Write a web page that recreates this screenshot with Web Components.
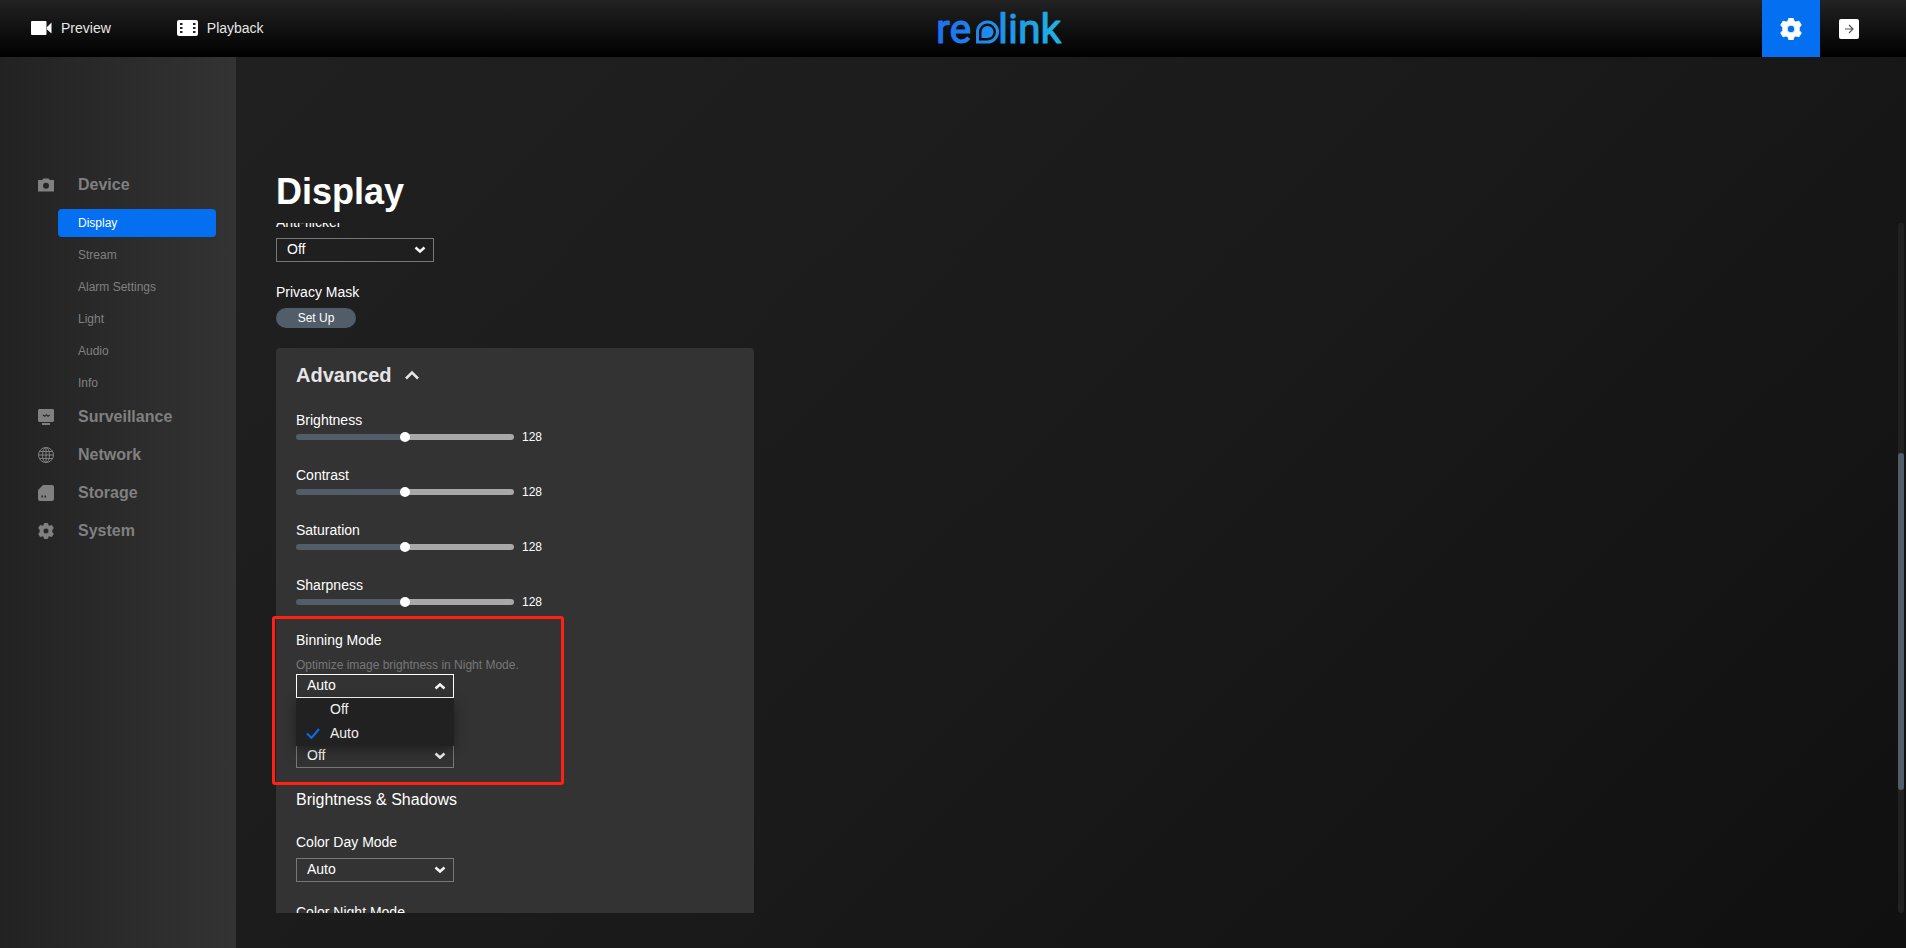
<!DOCTYPE html>
<html lang="en">

<head>
    <meta charset="UTF-8">
    <meta name="viewport" content="width=device-width, initial-scale=1.0">
    <title>Reolink</title>
    <style>
        body {
            margin: 0;
            height: 100vh;
            display: flex;
            flex-direction: column;
            overflow: hidden;
            background: #111;
            color: #fff;
            font: 14px/20px "Liberation Sans", Arial, sans-serif;
        }

        .page {
            flex: 1;
            min-height: 0;
            display: flex;
        }
    </style>
</head>

<body>
    <app-header></app-header>
    <div class="page">
        <side-nav>
            <nav-group name="Device" icon="camera">
                <nav-item active>Display</nav-item>
                <nav-item>Stream</nav-item>
                <nav-item>Alarm Settings</nav-item>
                <nav-item>Light</nav-item>
                <nav-item>Audio</nav-item>
                <nav-item>Info</nav-item>
            </nav-group>
            <nav-group name="Surveillance" icon="monitor"></nav-group>
            <nav-group name="Network" icon="globe"></nav-group>
            <nav-group name="Storage" icon="card"></nav-group>
            <nav-group name="System" icon="gear"></nav-group>
        </side-nav>
        <settings-page heading="Display">
            <select-field label="Anti-flicker" value="Off"></select-field>
            <button-field label="Privacy Mask">Set Up</button-field>
            <fold-panel heading="Advanced">
                <range-field label="Brightness" value="128"></range-field>
                <range-field label="Contrast" value="128"></range-field>
                <range-field label="Saturation" value="128"></range-field>
                <range-field label="Sharpness" value="128"></range-field>
                <marked-area>
                    <select-field label="Binning Mode" hint="Optimize image brightness in Night Mode." options="Off,Auto" value="Auto" open></select-field>
                    <select-field value="Off"></select-field>
                </marked-area>
                <sub-heading>Brightness &amp; Shadows</sub-heading>
                <select-field label="Color Day Mode" value="Auto"></select-field>
                <select-field label="Color Night Mode" value="Auto"></select-field>
            </fold-panel>
        </settings-page>
    </div>

    <template id="app-header">
        <style>
            :host {
                display: grid;
                grid-template-columns: 236px 1fr auto;
                height: 57px;
                background: linear-gradient(#222, #000);
            }

            nav {
                display: flex;
                align-items: center;
                gap: 66px;
                padding: 0 0 2px 31px;
                white-space: nowrap;
            }

            a {
                display: flex;
                align-items: center;
                gap: 8px;
                color: #e6e6e6;
                text-decoration: none;
            }

            svg {
                display: block;
            }

            .logo {
                display: flex;
                align-items: center;
                justify-content: center;
            }

            .tools {
                display: flex;
                padding-right: 28px;
            }

            button {
                width: 58px;
                padding: 0;
                border: 0;
                background: none;
                display: flex;
                align-items: center;
                justify-content: center;
            }

            .on {
                background: #046ff0;
            }
        </style>
        <nav>
            <a href="#preview">
                <svg width="22" height="16" viewBox="0 0 22 16">
                    <path fill="#fff" d="M1 1h13.500a1 1 0 0 1 1 1v12a1 1 0 0 1-1 1H1a1 1 0 0 1-1-1V2a1 1 0 0 1 1-1zM16 7l4.500-4.500v11L16 9.500z" />
                </svg>
                Preview
            </a>
            <a href="#playback">
                <svg width="22" height="16" viewBox="0 0 22 16">
                    <rect width="21" height="16" rx="2" fill="#fff" />
                    <path fill="#222" d="M3 3h2.500v2H3zM3 7h2.500v2H3zM3 11h2.500v2H3zM16 3h2.500v2H16zM16 7h2.500v2H16zM16 11h2.500v2H16z" />
                </svg>
                Playback
            </a>
        </nav>
        <div class="logo">
            <svg width="132" height="57" viewBox="0 0 132 57" role="img" aria-label="reolink">
                <defs>
                    <linearGradient id="ink" gradientUnits="userSpaceOnUse" x1="4" y1="0" x2="128" y2="0">
                        <stop offset="0" stop-color="#1f6ff2" />
                        <stop offset="1" stop-color="#1fb4e4" />
                    </linearGradient>
                </defs>
                <g fill="url(#ink)" stroke="url(#ink)" stroke-linejoin="round" font-family="Roboto, sans-serif" font-size="41">
                    <text x="3" y="43">re</text>
                    <text x="65" y="43">link</text>
                </g>
                <path fill="none" stroke="url(#ink)" stroke-width="3" d="M44.500 42V32a10 10 0 1 1 10 10z" />
                <path fill="url(#ink)" d="M48.500 38v-6a6 6 0 1 1 6 6z" />
            </svg>
        </div>
        <div class="tools">
            <button class="on" aria-label="Settings"><rl-icon name="gear" size="22" style="color: #fff"></rl-icon></button>
            <button aria-label="Log out">
                <svg width="20" height="20" viewBox="0 0 20 20">
                    <rect width="20" height="20" rx="2" fill="#fff" />
                    <path d="M6 10h7.500M10 6l4 4-4 4" fill="none" stroke="#555" stroke-width="1.200" />
                </svg>
            </button>
        </div>
    </template>

    <template id="side-nav">
        <style>
            :host {
                flex: none;
                box-sizing: border-box;
                width: 236px;
                padding: 109px 20px 0 38px;
                background: linear-gradient(90deg, #222, #333);
            }
        </style>
        <slot></slot>
    </template>

    <template id="nav-group">
        <style>
            :host {
                display: block;
            }

            button {
                display: flex;
                align-items: center;
                gap: 24px;
                width: 100%;
                height: 38px;
                padding: 0;
                border: 0;
                background: none;
                color: #808080;
                font: bold 16px/20px "Liberation Sans", Arial, sans-serif;
            }

            .items {
                display: flex;
                flex-direction: column;
                gap: 4px;
                padding: 5px 0 1px 20px;
            }

            :host(:empty) .items {
                display: none;
            }
        </style>
        <button><rl-icon size="16"></rl-icon><span></span></button>
        <div class="items">
            <slot></slot>
        </div>
    </template>

    <template id="nav-item">
        <style>
            :host {
                display: block;
            }

            a {
                display: block;
                padding: 0 20px;
                border-radius: 4px;
                color: #808080;
                font-size: 12px;
                line-height: 28px;
                text-decoration: none;
            }

            :host([active]) a {
                background: #046ff0;
                color: #fff;
            }
        </style>
        <a href="#"><slot></slot></a>
    </template>

    <template id="settings-page">
        <style>
            :host {
                flex: 1;
                min-width: 0;
                display: flex;
                flex-direction: column;
                padding: 113px 2px 35px 0;
                background: linear-gradient(135deg, #202020, #1a1a1a 50%, #101010);
            }

            h1 {
                margin: 0 0 9px 40px;
                font-size: 36px;
                line-height: 44px;
            }

            .body {
                flex: 1;
                min-height: 0;
                display: flex;
            }

            .scroll {
                flex: 1;
                overflow: hidden;
            }

            .list {
                display: flex;
                flex-direction: column;
                align-items: flex-start;
                gap: 20px;
                padding: 0 40px;
            }

            .bar {
                display: grid;
                grid-template-rows: 230fr 337fr 123fr;
                width: 6px;
                border-radius: 3px;
                background: #212121;
            }

            .thumb {
                grid-row: 2;
                border-radius: 3px;
                background: #515d68;
            }
        </style>
        <h1></h1>
        <div class="body">
            <div class="scroll">
                <div class="list">
                    <slot></slot>
                </div>
            </div>
            <div class="bar">
                <div class="thumb"></div>
            </div>
        </div>
    </template>

    <template id="fold-panel">
        <style>
            :host {
                display: block;
                box-sizing: border-box;
                width: 478px;
                max-width: 100%;
                padding: 15px 20px 20px;
                border-radius: 4px;
                background: #333;
            }

            h2 {
                margin: 0 0 23px;
                font-size: 20px;
                line-height: 24px;
            }

            button {
                display: flex;
                align-items: center;
                gap: 13px;
                padding: 0;
                border: 0;
                background: none;
                color: #e6e6e6;
                font: inherit;
            }

            .fields {
                display: flex;
                flex-direction: column;
                gap: 20px;
            }
        </style>
        <h2>
            <button aria-expanded="true">
                <span></span>
                <svg width="14" height="10" viewBox="0 0 14 10">
                    <path d="M1 8.500L7 2.500l6 6" fill="none" stroke="currentColor" stroke-width="2.500" />
                </svg>
            </button>
        </h2>
        <div class="fields">
            <slot></slot>
        </div>
    </template>

    <template id="marked-area">
        <style>
            :host {
                display: flex;
                flex-direction: column;
                gap: 20px;
                position: relative;
            }

            .frame {
                position: absolute;
                top: -14px;
                bottom: -17px;
                left: -24px;
                box-sizing: border-box;
                width: 292px;
                border: 3px solid #ff2113;
                border-radius: 3px;
                pointer-events: none;
                z-index: 2;
            }
        </style>
        <slot></slot>
        <div class="frame"></div>
    </template>

    <template id="sub-heading">
        <style>
            :host {
                display: block;
                font-size: 16px;
                line-height: 24px;
            }
        </style>
        <slot></slot>
    </template>

    <template id="select-field">
        <style>
            :host {
                display: block;
            }

            label {
                display: block;
                height: 20px;
                margin-bottom: 6px;
            }

            .hint {
                color: #777;
                font-size: 12px;
                line-height: 18px;
            }

            .box {
                position: relative;
                width: 158px;
            }

            select {
                appearance: none;
                display: block;
                box-sizing: border-box;
                width: 100%;
                height: 24px;
                margin: 0;
                padding: 0 10px 2px;
                border: 1px solid #777;
                border-radius: 0;
                background: none;
                color: #fff;
                font: inherit;
                outline: 0;
            }

            .arrow {
                position: absolute;
                top: 8px;
                right: 8px;
            }

            :host([open]) select {
                border-color: #fff;
            }

            :host([open]) .arrow {
                transform: rotate(180deg);
            }

            ul {
                position: absolute;
                top: 100%;
                left: 0;
                right: 0;
                margin: 0;
                padding: 0;
                list-style: none;
                background: #212121;
                box-shadow: 0 4px 12px rgba(0, 0, 0, .4);
                z-index: 1;
            }

            li {
                display: flex;
                align-items: center;
                gap: 10px;
                box-sizing: border-box;
                height: 24px;
                padding: 0 10px 2px;
                color: #f0f0f0;
            }

            li svg {
                visibility: hidden;
            }

            li[aria-selected=true] svg {
                visibility: visible;
            }
        </style>
        <label for="control"></label>
        <div class="hint"></div>
        <div class="box">
            <select id="control"></select>
            <svg class="arrow" width="12" height="8" viewBox="0 0 12 8">
                <path d="M1.500 1.500L6 5.500l4.500-4" fill="none" stroke="#f4f4f4" stroke-width="2.500" />
            </svg>
        </div>
    </template>

    <template id="button-field">
        <style>
            :host {
                display: block;
            }

            label {
                display: block;
                margin-bottom: 6px;
            }

            button {
                display: block;
                width: 80px;
                height: 20px;
                padding: 0;
                border: 0;
                border-radius: 10px;
                background: #515d68;
                color: #fff;
                font: 12px/20px "Liberation Sans", Arial, sans-serif;
            }
        </style>
        <label for="control"></label>
        <button id="control"><slot></slot></button>
    </template>

    <template id="range-field">
        <style>
            :host {
                display: block;
            }

            label {
                display: block;
            }

            .row {
                display: flex;
                gap: 8px;
                height: 15px;
            }

            input {
                appearance: none;
                width: 218px;
                height: 14px;
                margin: 0;
                background: none;
            }

            input::-webkit-slider-runnable-track {
                height: 6px;
                border-radius: 3px;
                background: linear-gradient(90deg, #515d68 50%, #a8a8a8 50%);
            }

            input::-webkit-slider-thumb {
                appearance: none;
                width: 10px;
                height: 10px;
                margin-top: -2px;
                border-radius: 50%;
                background: #fff;
            }

            output {
                font-size: 12px;
                line-height: 14px;
            }
        </style>
        <label for="control"></label>
        <div class="row">
            <input id="control" type="range" min="0" max="256">
            <output for="control"></output>
        </div>
    </template>

    <script>
        const icons = {
            camera: '<path fill-rule="evenodd" d="M0 3h4L5.500 1.500h5L12 3h4v11.500H0zM8 5.700a3 3 0 1 0 0 6 3 3 0 0 0 0-6z"/>',
            monitor: '<path fill-rule="evenodd" d="M1 0h14l1 1v11l-1 1H1l-1-1V1zM4.500 6.500L7 8l1.500-1.500L10 8l2-1.500V5.500l-2 1L8.500 5 7 6.500l-2-1zM4 14h8v2H4z"/>',
            globe: '<g fill="none" stroke="currentColor"><circle cx="8" cy="8" r="7.500"/><ellipse cx="8" cy="8" rx="3.500" ry="7.500"/><path d="M8 .5v15M.5 8h15M1.500 4.500h13M1.500 11.500h13"/></g>',
            card: '<path fill-rule="evenodd" d="M5 0h9a2 2 0 0 1 2 2v12a2 2 0 0 1-2 2H2a2 2 0 0 1-2-2V5zM3.500 10.500v2H5v-2zM6.500 10.500v2H8v-2z"/>',
            gear: '<path fill-rule="evenodd" d="M6.500 0h3l.7 2.200 1.300.7 2.300-.6 1.700 2.800L14 7v2l1.500 1.900-1.700 2.800-2.300-.6-1.300.7-.7 2.200h-3l-.7-2.200-1.300-.7-2.300.6L.5 10.900 2 9V7L.5 5.100l1.700-2.800 2.300.6 1.300-.7zM8 5.200a2.800 2.800 0 1 0 0 5.600 2.800 2.800 0 0 0 0-5.600z" stroke="currentColor" stroke-width=".6" stroke-linejoin="round"/>'
        };

        // attaches the template that has the same id as the tag
        class BaseElement extends HTMLElement {
            constructor() {
                super();
                const shadow = this.attachShadow({ mode: 'open' });
                const template = document.getElementById(this.localName);
                if (template) {
                    shadow.appendChild(template.content.cloneNode(true));
                }
            }

            $(selector) {
                return this.shadowRoot.querySelector(selector);
            }
        }

        class RlIcon extends BaseElement {
            static observedAttributes = ['name', 'size'];

            attributeChangedCallback() {
                const size = this.getAttribute('size');
                this.shadowRoot.innerHTML = `
                    <style>:host { display: block; } svg { display: block; }</style>
                    <svg width="${size}" height="${size}" viewBox="0 0 16 16" fill="currentColor">${icons[this.getAttribute('name')] || ''}</svg>`;
            }
        }

        class NavGroup extends BaseElement {
            connectedCallback() {
                this.$('span').textContent = this.getAttribute('name');
                this.$('rl-icon').setAttribute('name', this.getAttribute('icon'));
            }
        }

        class SettingsPage extends BaseElement {
            connectedCallback() {
                this.$('h1').textContent = this.getAttribute('heading');
                // 11px of the first label stay above the edge
                requestAnimationFrame(() => this.$('.scroll').scrollTop = 11);
            }
        }

        class FoldPanel extends BaseElement {
            connectedCallback() {
                this.$('span').textContent = this.getAttribute('heading');
            }
        }

        class SelectField extends BaseElement {
            connectedCallback() {
                const value = this.getAttribute('value');
                const options = (this.getAttribute('options') || value).split(',');
                const hint = this.getAttribute('hint');
                const select = this.$('select');

                this.$('label').textContent = this.getAttribute('label');
                if (hint) {
                    this.$('.hint').textContent = hint;
                } else {
                    this.$('.hint').remove();
                }
                options.forEach(text => select.add(new Option(text, text, false, text === value)));

                if (this.hasAttribute('open')) {
                    const list = document.createElement('ul');
                    list.setAttribute('role', 'listbox');
                    list.innerHTML = options.map(text => `
                        <li role="option" aria-selected="${text === value}">
                            <svg width="14" height="12" viewBox="0 0 14 12"><path d="M1 6.500l4.500 4.500L13 2" fill="none" stroke="#0a6cf0" stroke-width="2"/></svg>
                            <span>${text}</span>
                        </li>`).join('');
                    this.$('.box').appendChild(list);
                }
            }
        }

        class ButtonField extends BaseElement {
            connectedCallback() {
                this.$('label').textContent = this.getAttribute('label');
            }
        }

        class RangeField extends BaseElement {
            connectedCallback() {
                const input = this.$('input');
                this.$('label').textContent = this.getAttribute('label');
                input.value = this.getAttribute('value');
                this.$('output').textContent = input.value;
                input.addEventListener('input', () => this.$('output').textContent = input.value);
            }
        }

        customElements.define('rl-icon', RlIcon);
        customElements.define('app-header', class extends BaseElement {});
        customElements.define('side-nav', class extends BaseElement {});
        customElements.define('nav-item', class extends BaseElement {});
        customElements.define('nav-group', NavGroup);
        customElements.define('marked-area', class extends BaseElement {});
        customElements.define('sub-heading', class extends BaseElement {});
        customElements.define('select-field', SelectField);
        customElements.define('button-field', ButtonField);
        customElements.define('range-field', RangeField);
        customElements.define('fold-panel', FoldPanel);
        customElements.define('settings-page', SettingsPage);
    </script>
</body>

</html>
